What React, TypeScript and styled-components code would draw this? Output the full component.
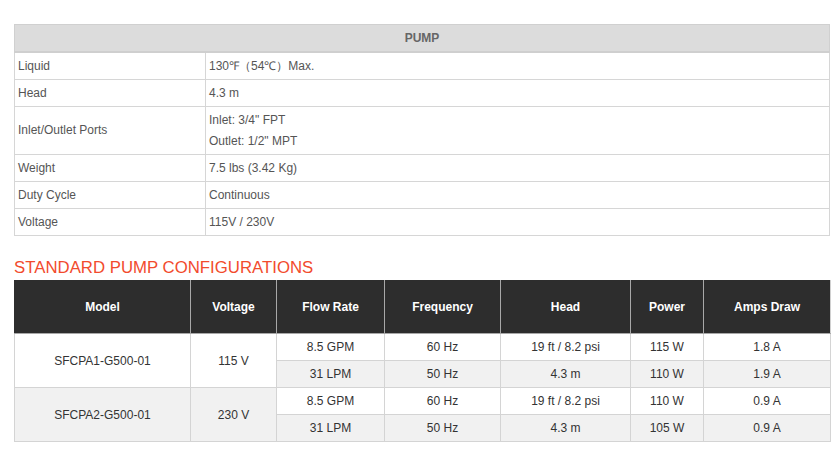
import React from "react";
import styled, { createGlobalStyle } from "styled-components";

const Global = createGlobalStyle`
  html, body { margin: 0; padding: 0; background: #fff; }
  body { font-family: Arial, "Liberation Sans", sans-serif; }
`;

const Page = styled.div`
  padding: 24px 10px 0 14px;
  width: 816px;
`;

const SpecTable = styled.table`
  width: 816px;
  border-collapse: collapse;
  table-layout: fixed;
  font-size: 12px;
  color: #555;
  border: 1px solid #d6d6d6;
`;

const SpecHead = styled.th`
  background: #dcdcdc;
  color: #666;
  font-weight: bold;
  text-align: center;
  height: 26px;
  padding: 0;
  border: 1px solid #d0d0d0;
  border-bottom: 2px solid #cfcfcf;
`;

const SpecCell = styled.td<{ $tall?: boolean }>`
  height: ${(p) => (p.$tall ? "47px" : "26px")};
  padding: 0 4px 0 3px;
  border: 1px solid #d6d6d6;
  vertical-align: middle;
  line-height: 21px;
`;

const Line = styled.div``;

const Title = styled.h2`
  margin: 22px 0 2px 0;
  font-size: 16.8px;
  font-weight: normal;
  color: #f24b2d;
  line-height: 20px;
`;

const ConfigTable = styled.table`
  width: 816px;
  border-collapse: collapse;
  table-layout: fixed;
  font-size: 12px;
  color: #333;
  text-align: center;
  border: 1px solid #d0d0d0;
`;

const ConfigHead = styled.th`
  background: #2d2d2d;
  color: #fff;
  font-weight: bold;
  height: 52px;
  padding: 0;
  border: 1px solid #a8a8a8;
  border-top-color: #2d2d2d;
  border-left-color: #2d2d2d;
  &:not(:first-child) { border-left-color: #a8a8a8; }
  &:last-child { border-right-color: #d0d0d0; }
`;

const ConfigCell = styled.td<{ $gray?: boolean }>`
  background: ${(p) => (p.$gray ? "#f1f1f1" : "#fff")};
  height: 26px;
  padding: 0;
  border: 1px solid #d4d4d4;
  vertical-align: middle;
`;

const specs: { label: string; value: string[] }[] = [
  { label: "Liquid", value: ["130℉（54℃）Max."] },
  { label: "Head", value: ["4.3 m"] },
  { label: "Inlet/Outlet Ports", value: ['Inlet: 3/4" FPT', 'Outlet: 1/2" MPT'] },
  { label: "Weight", value: ["7.5 lbs (3.42 Kg)"] },
  { label: "Duty Cycle", value: ["Continuous"] },
  { label: "Voltage", value: ["115V / 230V"] },
];

const widths = [176, 86, 108, 116, 130, 73, 127];
const heads = ["Model", "Voltage", "Flow Rate", "Frequency", "Head", "Power", "Amps Draw"];

const configs = [
  {
    model: "SFCPA1-G500-01",
    voltage: "115 V",
    gray: false,
    rows: [
      ["8.5 GPM", "60 Hz", "19 ft / 8.2 psi", "115 W", "1.8 A"],
      ["31 LPM", "50 Hz", "4.3 m", "110 W", "1.9 A"],
    ],
  },
  {
    model: "SFCPA2-G500-01",
    voltage: "230 V",
    gray: true,
    rows: [
      ["8.5 GPM", "60 Hz", "19 ft / 8.2 psi", "110 W", "0.9 A"],
      ["31 LPM", "50 Hz", "4.3 m", "105 W", "0.9 A"],
    ],
  },
];

export default function App() {
  return (
    <>
      <Global />
      <Page>
        <SpecTable>
          <colgroup>
            <col style={{ width: 191 }} />
            <col />
          </colgroup>
          <thead>
            <tr>
              <SpecHead colSpan={2}>PUMP</SpecHead>
            </tr>
          </thead>
          <tbody>
            {specs.map((s) => (
              <tr key={s.label}>
                <SpecCell $tall={s.value.length > 1}>{s.label}</SpecCell>
                <SpecCell $tall={s.value.length > 1}>
                  {s.value.map((v) => (
                    <Line key={v}>{v}</Line>
                  ))}
                </SpecCell>
              </tr>
            ))}
          </tbody>
        </SpecTable>
        <Title>STANDARD PUMP CONFIGURATIONS</Title>
        <ConfigTable>
          <colgroup>
            {widths.map((w, i) => (
              <col key={i} style={{ width: w }} />
            ))}
          </colgroup>
          <thead>
            <tr>
              {heads.map((h) => (
                <ConfigHead key={h}>{h}</ConfigHead>
              ))}
            </tr>
          </thead>
          <tbody>
            {configs.map((c) =>
              c.rows.map((r, ri) => (
                <tr key={c.model + ri}>
                  {ri === 0 && (
                    <>
                      <ConfigCell rowSpan={2} $gray={c.gray}>{c.model}</ConfigCell>
                      <ConfigCell rowSpan={2} $gray={c.gray}>{c.voltage}</ConfigCell>
                    </>
                  )}
                  {r.map((v, vi) => (
                    <ConfigCell key={vi} $gray={ri === 1}>{v}</ConfigCell>
                  ))}
                </tr>
              ))
            )}
          </tbody>
        </ConfigTable>
      </Page>
    </>
  );
}
